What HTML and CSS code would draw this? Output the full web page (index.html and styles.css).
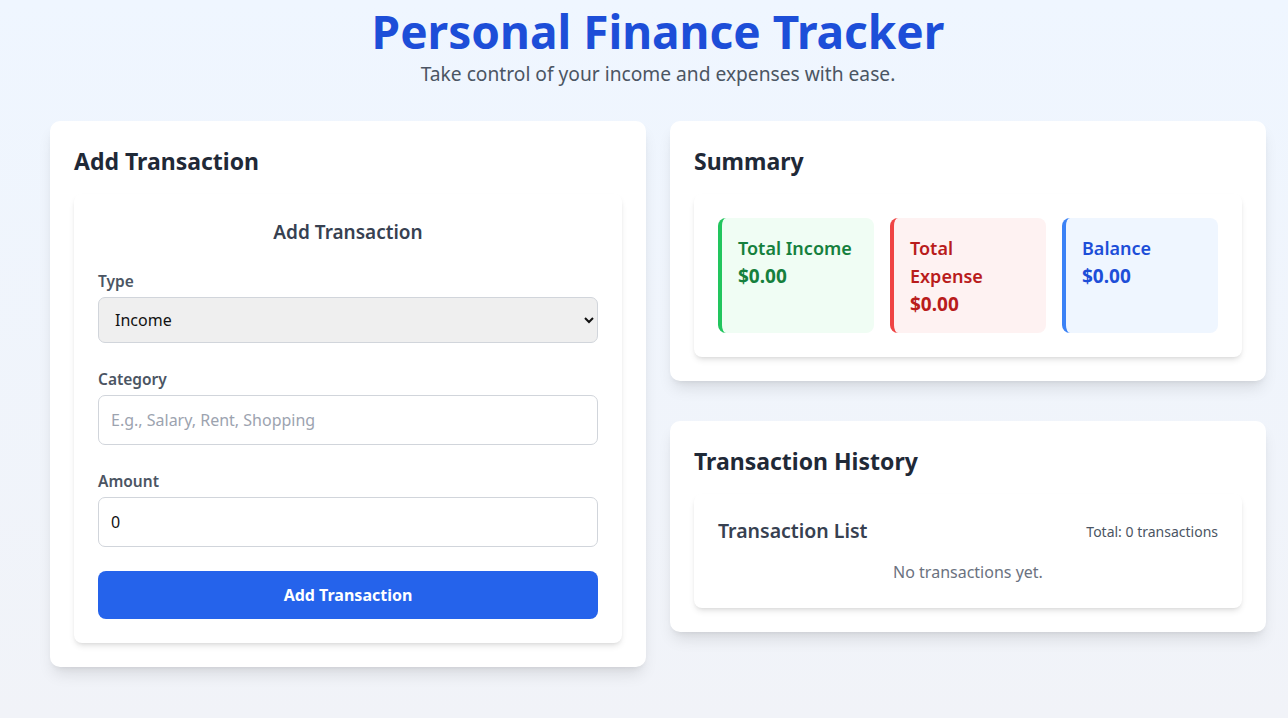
FILE: index.html
```html
<!DOCTYPE html>
<html lang="en">
<head>
<meta charset="utf-8">
<title>Personal Finance Tracker</title>
<link rel="stylesheet" href="styles.css">
</head>
<body>
<div class="page">
  <header class="header">
    <h1 class="title">Personal Finance Tracker</h1>
    <p class="subtitle">Take control of your income and expenses with ease.</p>
  </header>
  <main class="grid">
    <section class="card">
      <h2 class="card-title">Add Transaction</h2>
      <form class="inner form">
        <h3 class="form-title">Add Transaction</h3>
        <div class="field">
          <label class="label" for="type">Type</label>
          <select id="type" class="select">
            <option>Income</option>
            <option>Expense</option>
          </select>
        </div>
        <div class="field">
          <label class="label" for="cat">Category</label>
          <input id="cat" class="input" type="text" placeholder="E.g., Salary, Rent, Shopping">
        </div>
        <div class="field">
          <label class="label" for="amt">Amount</label>
          <input id="amt" class="input" type="number" value="0">
        </div>
        <button type="button" class="btn">Add Transaction</button>
      </form>
    </section>
    <div class="col">
      <section class="card">
        <h2 class="card-title">Summary</h2>
        <div class="inner summary">
          <div class="stat stat-income">
            <div class="stat-label">Total Income</div>
            <div class="stat-value">$0.00</div>
          </div>
          <div class="stat stat-expense">
            <div class="stat-label">Total Expense</div>
            <div class="stat-value">$0.00</div>
          </div>
          <div class="stat stat-balance">
            <div class="stat-label">Balance</div>
            <div class="stat-value">$0.00</div>
          </div>
        </div>
      </section>
      <section class="card">
        <h2 class="card-title">Transaction History</h2>
        <div class="inner list">
          <div class="list-head">
            <h3 class="list-title">Transaction List</h3>
            <span class="list-count">Total: 0 transactions</span>
          </div>
          <p class="empty">No transactions yet.</p>
        </div>
      </section>
    </div>
  </main>
</div>
</body>
</html>
```

FILE: styles.css
```css
* { box-sizing: border-box; }
html, body { margin: 0; padding: 0; }
body {
  font-family: "Noto Sans", "Open Sans", sans-serif;
  background: linear-gradient(to bottom, #eff6ff 0%, #f1f3f8 100%);
  min-height: 718px;
  color: #1f2937;
}
.page {
  width: 1216px;
  margin-left: 50px;
  padding-top: 7px;
}
.header { text-align: center; margin-bottom: 33px; }
.title {
  margin: 0;
  font-size: 46px;
  line-height: 48px;
  font-weight: 700;
  color: #1d4ed8;
}
.subtitle {
  margin: 5px 0 0;
  font-size: 19.2px;
  line-height: 28px;
  color: #4b5563;
}
.grid {
  display: grid;
  grid-template-columns: 596px 596px;
  gap: 24px;
  align-items: start;
}
.col { display: flex; flex-direction: column; gap: 40px; }
.card {
  background: #fff;
  border-radius: 10px;
  padding: 24px;
  box-shadow: 0 10px 15px -3px rgba(0,0,0,.1), 0 4px 6px -4px rgba(0,0,0,.1);
}
.card-title {
  margin: 0 0 17px;
  font-size: 23px;
  line-height: 32px;
  font-weight: 700;
  color: #1f2937;
}
.inner {
  background: #fff;
  border-radius: 8px;
  padding: 24px;
  box-shadow: 0 4px 6px -1px rgba(0,0,0,.1), 0 2px 4px -2px rgba(0,0,0,.1);
}
.form-title {
  margin: 0 0 23px;
  text-align: center;
  font-size: 19px;
  line-height: 28px;
  font-weight: 600;
  color: #374151;
}
.field { margin-bottom: 24px; }
.label {
  display: block;
  font-size: 15.5px;
  line-height: 24px;
  font-weight: 600;
  color: #4b5563;
  margin-bottom: 4px;
}
.select, .input {
  display: block;
  width: 100%;
  font-family: inherit;
  font-size: 16px;
  color: #111;
  border: 1px solid #d1d5db;
  border-radius: 7px;
}
.select {
  height: 46px;
  padding: 0 8px 0 12px;
  background-color: #efefef;
}
.input {
  height: 50px;
  padding: 0 12px;
  background: #fff;
}
.input::placeholder { color: #9ca3af; }
.btn {
  display: block;
  width: 100%;
  height: 48px;
  border: 0;
  border-radius: 8px;
  background: #2563eb;
  color: #fff;
  font-family: inherit;
  font-size: 16px;
  font-weight: 700;
}
.summary {
  display: grid;
  grid-template-columns: repeat(3, 1fr);
  gap: 16px;
  align-items: start;
}
.stat {
  border-radius: 8px;
  border-left: 4px solid;
  padding: 16px 20px 15px 16px;
  min-height: 115px;
}
.stat-label { font-size: 18px; line-height: 28px; font-weight: 600; }
.stat-value { font-size: 19px; line-height: 28px; font-weight: 700; }
.stat-income { background: #f0fdf4; border-color: #22c55e; color: #15803d; }
.stat-expense { background: #fef2f2; border-color: #ef4444; color: #b91c1c; }
.stat-balance { background: #eff6ff; border-color: #3b82f6; color: #1d4ed8; }
.list-head {
  display: flex;
  justify-content: space-between;
  align-items: center;
  margin-bottom: 16px;
}
.list-title {
  margin: 0;
  font-size: 19.5px;
  line-height: 26px;
  font-weight: 600;
  color: #374151;
}
.list-count { font-size: 14px; color: #4b5563; }
.empty {
  margin: 0;
  text-align: center;
  font-size: 16px;
  line-height: 24px;
  color: #6b7280;
}
```
